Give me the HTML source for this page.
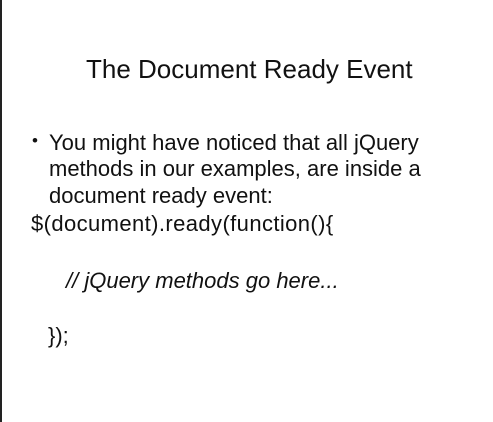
<!DOCTYPE html>
<html><head><meta charset="utf-8"><style>
html,body{margin:0;padding:0;width:493px;height:422px;background:#fff;overflow:hidden}
body{position:relative;font-family:"Liberation Sans",Arial,sans-serif;color:#111}
.b{position:absolute;left:0;top:0;width:2px;height:422px;background:#222}
.t{position:absolute;white-space:nowrap;line-height:1}
</style></head><body>
<div class="b"></div>
<div class="t" style="left:86px;top:56px;font-size:26px;">The Document Ready Event</div>
<div class="t" style="left:32px;top:132px;font-size:17px;">•</div>
<div class="t" style="left:49px;top:132px;font-size:22px;">You might have noticed that all jQuery</div>
<div class="t" style="left:49px;top:158px;font-size:22px;">methods in our examples, are inside a</div>
<div class="t" style="left:49px;top:185px;font-size:22px;">document ready event:</div>
<div class="t" style="left:31px;top:213px;font-size:22px;letter-spacing:0.4px;">$(document).ready(function(){</div>
<div class="t" style="left:66px;top:270px;font-size:22px;font-style:italic;">// jQuery methods go here...</div>
<div class="t" style="left:48px;top:325px;font-size:22px;">});</div>
</body></html>
